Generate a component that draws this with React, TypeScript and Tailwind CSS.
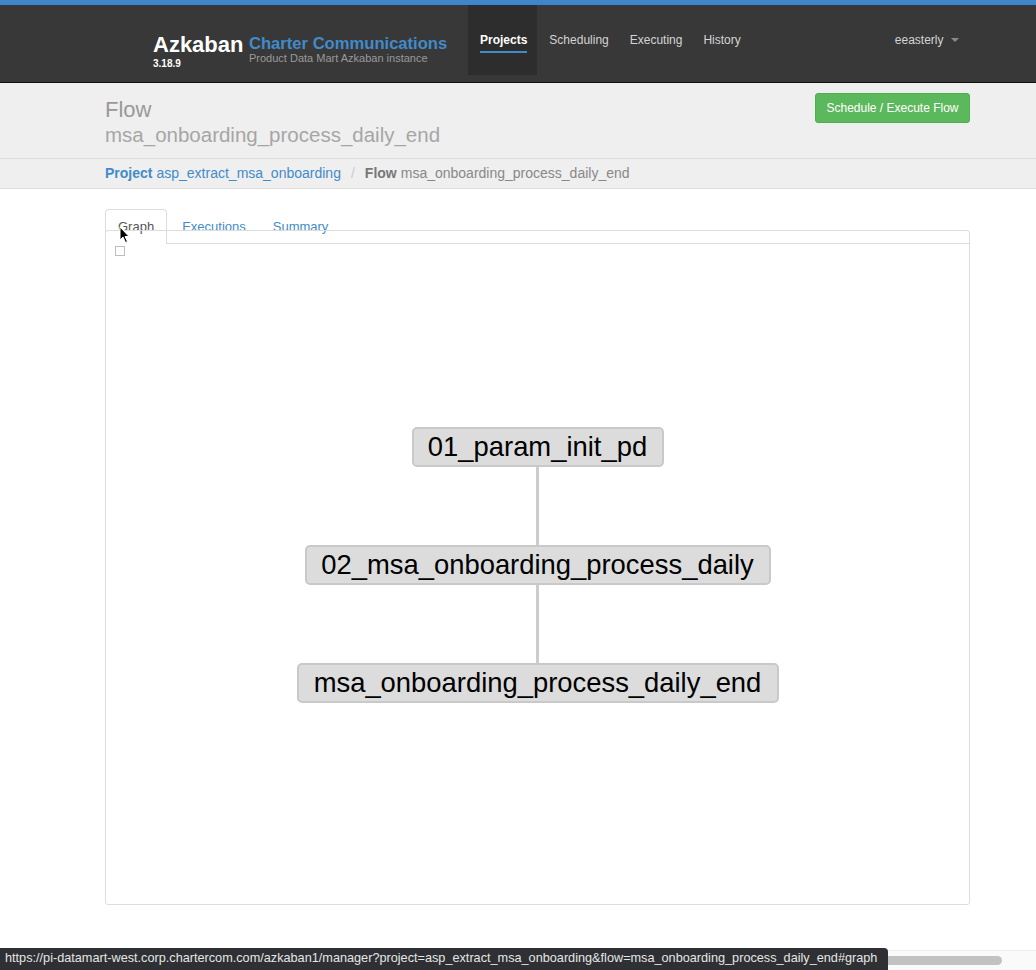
import React from "react";

const font = { fontFamily: '"Liberation Sans", Arial, Helvetica, sans-serif' };

function Node({ label, w }: { label: string; w: number }) {
  return (
    <div
      className="h-[40px] flex items-center justify-center rounded-[5px] border-2 border-[#c9c9c9] bg-[#dcdcdc] text-[27.4px] text-black leading-none"
      style={{ width: w }}
    >
      {label}
    </div>
  );
}

function Connector() {
  return <div className="w-[3px] h-[78px] bg-[#cccccc]" />;
}

export default function App() {
  return (
    <div className="relative w-[1036px] h-[970px] bg-white overflow-hidden" style={font}>
      {/* top blue bar */}
      <div className="h-[5px] bg-[#3e87ca]" />
      {/* navbar */}
      <div className="h-[78px] bg-[#383838] border-b border-[#111] flex items-start pl-[153px]">
        <div className="flex flex-col pt-[27px] w-[96px]">
          <div className="text-[22px] font-bold text-white leading-[26px]">Azkaban</div>
          <div className="text-[10px] font-bold text-white leading-[12px] mt-[0px]">3.18.9</div>
        </div>
        <div className="flex flex-col pt-[30px] w-[219px]">
          <div className="text-[16.6px] font-bold text-[#428bca] leading-[18px]">Charter Communications</div>
          <div className="text-[11px] text-[#9a9a9a] leading-[13px] mt-[-1px]">Product Data Mart Azkaban instance</div>
        </div>
        <div className="flex items-start text-[12px]">
          <div className="h-[70px] bg-[#2d2d2d] pl-[12px] pr-[10px] pt-[28px]">
            <div className="font-bold text-white leading-[14px] pb-[4px] border-b-2 border-[#428bca]">Projects</div>
          </div>
          <div className="pl-[12px] pr-[9px] pt-[28px] text-[#d4d4d4] leading-[14px]">Scheduling</div>
          <div className="pl-[12px] pr-[9px] pt-[28px] text-[#d4d4d4] leading-[14px]">Executing</div>
          <div className="pl-[12px] pt-[28px] text-[#d4d4d4] leading-[14px]">History</div>
        </div>
        <div className="ml-[154px] pt-[28px] text-[12px] text-[#d4d4d4] leading-[14px] flex items-center">
          eeasterly
          <span className="ml-[7px] inline-block w-0 h-0 border-l-[4px] border-r-[4px] border-t-[4px] border-l-transparent border-r-transparent border-t-[#8a8a8a]" />
        </div>
      </div>

      {/* header */}
      <div className="bg-[#efefef] border-b border-[#dddddd] h-[76px] pl-[105px] pr-[66px] flex justify-between">
        <div className="pt-[14px]">
          <div className="text-[22px] text-[#999999] leading-[25px]">Flow</div>
          <div className="text-[20.5px] text-[#a6a6a6] leading-[25px]">msa_onboarding_process_daily_end</div>
        </div>
        <div className="pt-[10px]">
          <div className="h-[30px] w-[155px] rounded-[3px] bg-[#5cb85c] border border-[#4cae4c] flex items-center justify-center text-[12px] text-white">
            Schedule / Execute Flow
          </div>
        </div>
      </div>

      {/* breadcrumb */}
      <div className="bg-[#efefef] border-b border-[#dddddd] h-[30px] pl-[105px] flex items-center text-[14px]">
        <span className="font-bold text-[#428bca]">Project</span>
        <span className="ml-[4px] text-[#428bca]">asp_extract_msa_onboarding</span>
        <span className="mx-[10px] text-[#cccccc]">/</span>
        <span className="font-bold text-[#777777]">Flow</span>
        <span className="ml-[4px] text-[#888888]">msa_onboarding_process_daily_end</span>
      </div>

      {/* content */}
      <div className="pl-[105px] pt-[20px] w-[970px]">
        <div className="flex items-end border-b border-[#dddddd] h-[35px] text-[13px]">
          <div className="h-[35px] px-[12px] pt-[7px] border border-b-0 border-[#dddddd] rounded-t-[4px] bg-white text-[#555555] mb-[-1px] relative">
            Graph
          </div>
          <div className="h-[35px] ml-[3px] px-[12px] pt-[9px] text-[#428bca]">Executions</div>
          <div className="h-[35px] ml-[3px] px-[12px] pt-[9px] text-[#428bca]">Summary</div>
        </div>
        <div className="relative mt-[-14px] h-[675px] border border-[#dddddd] rounded-[3px]">
          <div className="absolute left-[9px] top-[15px] w-[10px] h-[10px] border border-[#bdbdbd] bg-white" />
          <div className="flex flex-col items-center pt-[196px]">
            <Node label="01_param_init_pd" w={252} />
            <Connector />
            <Node label="02_msa_onboarding_process_daily" w={466} />
            <Connector />
            <Node label="msa_onboarding_process_daily_end" w={482} />
          </div>
        </div>
      </div>

      {/* cursor */}
      <svg className="absolute left-[119px] top-[226px]" width="12" height="18" viewBox="0 0 12 18">
        <path d="M1 1 L1 14 L4 11 L6.5 16.5 L8.5 15.5 L6 10.5 L10 10.5 Z" fill="#000" stroke="#fff" strokeWidth="1" />
      </svg>

      {/* horizontal scrollbar */}
      <div className="absolute left-0 right-0 bottom-0 h-[20px] bg-[#fafafa] border-t border-[#ececec] flex items-center pl-[2px]">
        <div className="h-[9px] w-[1000px] rounded-full bg-[#c2c2c2]" />
      </div>
      {/* status bar */}
      <div className="absolute left-0 bottom-0 h-[22px] w-[888px] bg-[#2e3033] rounded-tr-[4px] flex items-center pl-[5px] text-[12.7px] text-[#e6e6e6] whitespace-nowrap overflow-hidden">
        https://pi-datamart-west.corp.chartercom.com/azkaban1/manager?project=asp_extract_msa_onboarding&amp;flow=msa_onboarding_process_daily_end#graph
      </div>
    </div>
  );
}
